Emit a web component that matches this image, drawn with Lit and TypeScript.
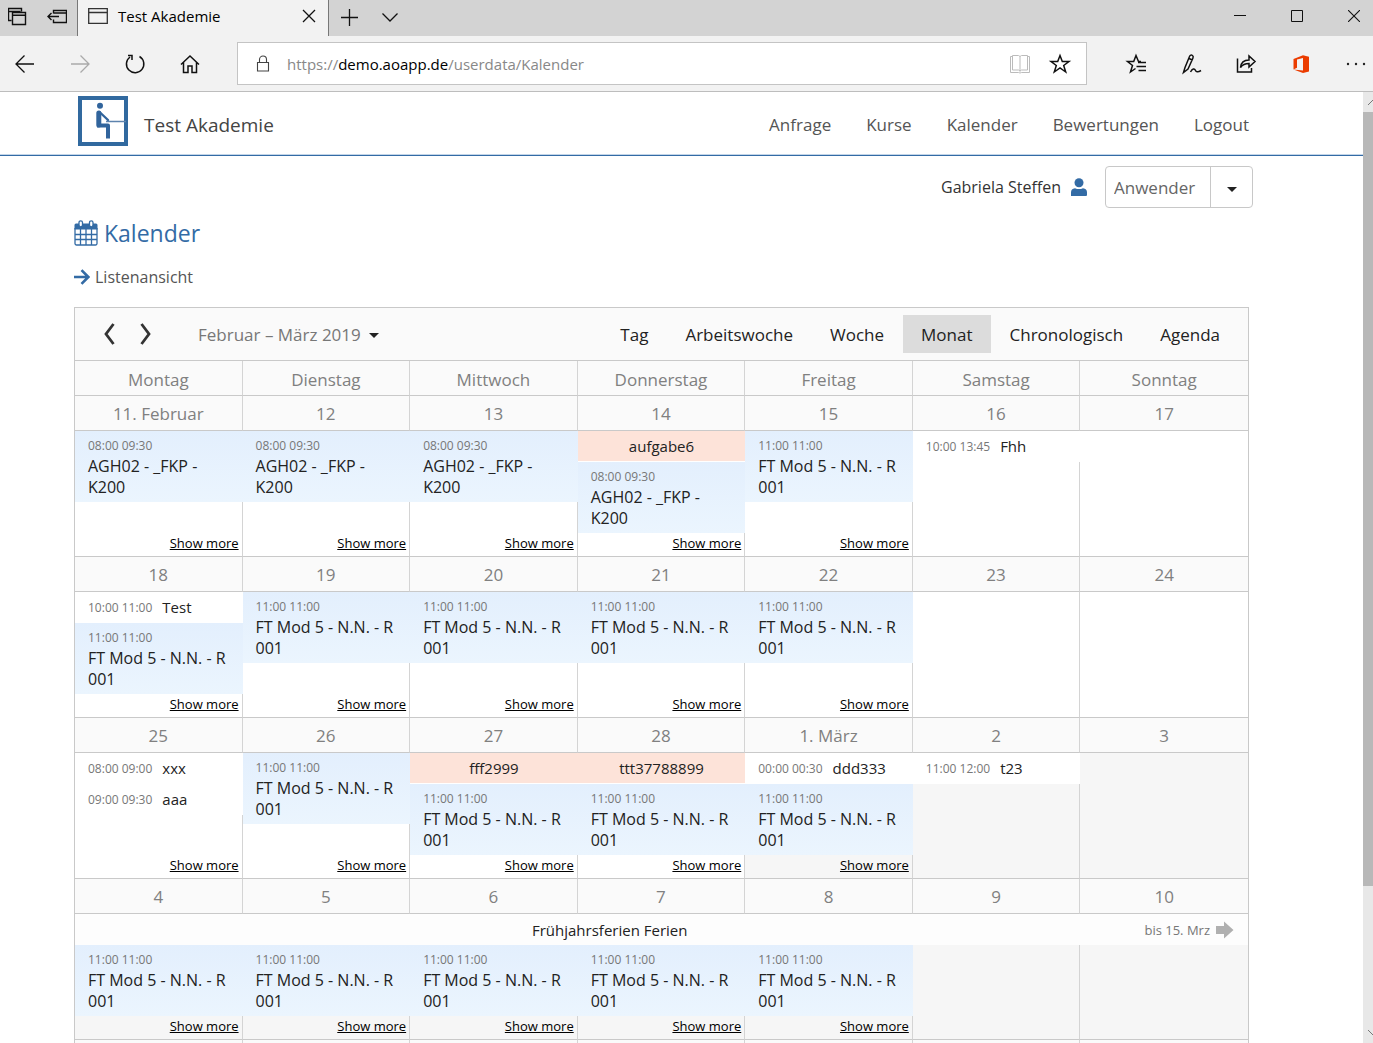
import { LitElement, html, css, svg, nothing } from "lit";
import { customElement, state } from "lit/decorators.js";
import { classMap } from "lit/directives/class-map.js";

type Kind = "course" | "plain" | "task";
interface Entry { kind: Kind; time?: string; title: string; }
interface Day { label: string; entries: Entry[]; more?: boolean; outside?: boolean; }
interface Week { days: Day[]; banner?: { title: string; until: string }; }

const course = (time: string, title: string): Entry => ({ kind: "course", time, title });
const plain = (time: string, title: string): Entry => ({ kind: "plain", time, title });
const task = (title: string): Entry => ({ kind: "task", title });
const agh = () => course("08:00 09:30", "AGH02 - _FKP - K200");
const mod = () => course("11:00 11:00", "FT Mod 5 - N.N. - R 001");

const WEEKDAYS = ["Montag", "Dienstag", "Mittwoch", "Donnerstag", "Freitag", "Samstag", "Sonntag"];
const VIEWS = ["Tag", "Arbeitswoche", "Woche", "Monat", "Chronologisch", "Agenda"];
const LINKS = ["Anfrage", "Kurse", "Kalender", "Bewertungen", "Logout"];

const WEEKS: Week[] = [
  {
    days: [
      { label: "11. Februar", entries: [agh()], more: true },
      { label: "12", entries: [agh()], more: true },
      { label: "13", entries: [agh()], more: true },
      { label: "14", entries: [task("aufgabe6"), agh()], more: true },
      { label: "15", entries: [mod()], more: true },
      { label: "16", entries: [plain("10:00 13:45", "Fhh")] },
      { label: "17", entries: [] },
    ],
  },
  {
    days: [
      { label: "18", entries: [plain("10:00 11:00", "Test"), mod()], more: true },
      { label: "19", entries: [mod()], more: true },
      { label: "20", entries: [mod()], more: true },
      { label: "21", entries: [mod()], more: true },
      { label: "22", entries: [mod()], more: true },
      { label: "23", entries: [] },
      { label: "24", entries: [] },
    ],
  },
  {
    days: [
      { label: "25", entries: [plain("08:00 09:00", "xxx"), plain("09:00 09:30", "aaa")], more: true },
      { label: "26", entries: [mod()], more: true },
      { label: "27", entries: [task("fff2999"), mod()], more: true },
      { label: "28", entries: [task("ttt37788899"), mod()], more: true },
      { label: "1. März", entries: [plain("00:00 00:30", "ddd333"), mod()], more: true, outside: true },
      { label: "2", entries: [plain("11:00 12:00", "t23")], outside: true },
      { label: "3", entries: [], outside: true },
    ],
  },
  {
    banner: { title: "Frühjahrsferien Ferien", until: "bis 15. Mrz" },
    days: [
      { label: "4", entries: [mod()], more: true, outside: true },
      { label: "5", entries: [mod()], more: true, outside: true },
      { label: "6", entries: [mod()], more: true, outside: true },
      { label: "7", entries: [mod()], more: true, outside: true },
      { label: "8", entries: [mod()], more: true, outside: true },
      { label: "9", entries: [], outside: true },
      { label: "10", entries: [], outside: true },
    ],
  },
  {
    days: WEEKDAYS.map(() => ({ label: "", entries: [], outside: true })),
  },
];

const caret = html`<svg class="caret" width="10" height="5" viewBox="0 0 10 5" aria-hidden="true"><path d="M0 0h10L5 5z" fill="#222" /></svg>`;

const line = (body: unknown, size = 24, color = "#111", width = 1.3) => html`
  <svg width=${size} height=${size} viewBox="0 0 ${size} ${size}" fill="none" stroke=${color}
    stroke-width=${width} aria-hidden="true">${body}</svg>`;

const icons = {
  tabs: line(svg`<path d="M3.500 14.500h-3v-12h13v3M.5 5.500h12M4.500 6.500h13v12h-13zM4.500 9.200h13" transform="translate(0 -1)" stroke-width="1.400"/>`, 20),
  aside: line(svg`<path d="M6.500 6.500v-3h13v12h-13v-3M6.500 6h13M1 9.500h11M4.500 6l-3.500 3.500 3.500 3.500" stroke-width="1.400"/>`, 20),
  page: line(svg`<path d="M.7.700h18.600v14.600H.7zM.7 4.500h18.600"/>`, 20, "#333"),
  close: line(svg`<path d="M1 1l12 12M13 1L1 13"/>`, 14),
  plus: line(svg`<path d="M8.500 0v17M0 8.500h17"/>`, 17),
  down: line(svg`<path d="M.5 4.500l7.500 7.500 7.500-7.500"/>`, 16),
  min: line(svg`<path d="M0 5.500h12" stroke-width="1"/>`, 12),
  max: line(svg`<path d="M.5.500h11v11H.5z" stroke-width="1"/>`, 12),
  shut: line(svg`<path d="M0 0l12 12M12 0L0 12" stroke-width="1.100"/>`, 12),
  back: line(svg`<path d="M21 12H3.500M11.500 3.500L3 12l8.500 8.500"/>`),
  forward: line(svg`<path d="M3 12h17.500M12.500 3.500L21 12l-8.500 8.500"/>`, 24, "#aaa"),
  reload: line(svg`<path d="M16.500 4.500A8.700 8.700 0 1 1 7 5M5 3.500h4v4.500" stroke-width="1.500"/>`),
  home: line(svg`<path d="M3 12.500L12 4l9 8.500M5.500 10.500v10h4.500v-6.500h4v6.500h4.500v-10" stroke-width="1.500"/>`),
  lock: line(svg`<path d="M4.500 8.500h11v8.500h-11zM6.500 8.500V5.500a3.500 3.500 0 0 1 7 0v3"/>`, 20, "#444", 1.1),
  book: line(svg`<path d="M4.500 3.500h6l1.500 1 1.500-1h6v14.500h-6l-1.500 1-1.500-1h-6zM12 4.500v15M4.500 4.500h-2v16h8l1.500.5 1.500-.5h8v-16h-2" />`, 24, "#bbb", 1),
  star: line(svg`<path d="M12 3.500l2.300 6H21l-5.300 4 2 6.500L12 16l-5.700 4 2-6.500-5.300-4h6.700z" stroke-width="1.500"/>`),
  favs: line(svg`<path d="M16 9.500h-2.500L11 3.500 8.700 9.500H2.500l5 4-2 6.500 5-3.500M13 10.500h8M11.500 14.500h9.500M13.500 18.500h7.500" stroke-width="1.500"/>`),
  pen: line(svg`<path d="M3.500 20.500l1.500-5L9.500 4.500q1.200-2.200 3-1 1.200 1 .4 2.700L8 17zM9 6.500l3.300 1.500M10.500 20c2-3.500 4-3.800 4.700-2s2.300 2.800 5.800.5" stroke-width="1.500"/>`),
  share: line(svg`<path d="M2.500 6.500v13.500h14v-4M5.500 15.500c.5-5 3.500-7.500 8.500-7.500V4l6 5.500-6 5.500v-3.500c-4 0-6.500 1-8.500 4z" stroke-width="1.500"/>`),
  office: html`<svg width="24" height="24" viewBox="0 0 24 24" aria-hidden="true"><path d="M3.500 7l9.500-3.800 6 1.500v14.800L13 21l-9.500-3.500 9.500 1V6L7 7.500v8.300L3.500 17.500z" fill="#eb3c00" /></svg>`,
  dots: html`<svg width="24" height="24" viewBox="0 0 24 24" aria-hidden="true"><g fill="#222"><circle cx="3" cy="12" r="1.200"/><circle cx="11" cy="12" r="1.200"/><circle cx="19" cy="12" r="1.200"/></g></svg>`,
  logo: html`<svg width="50" height="50" viewBox="0 0 50 50" role="img" aria-label="Test Akademie">
    <rect x="2" y="2" width="46" height="46" fill="#fff" stroke="#31699f" stroke-width="4" />
    <path d="M28 25.500h20" stroke="#5d83ad" stroke-width="1.500" />
    <g fill="none" stroke="#31649c" stroke-linejoin="round">
      <path d="M20.800 17v12" stroke-width="5" stroke-linecap="round" />
      <path d="M21.500 16l8.500 8" stroke-width="2.400" stroke-linecap="round" />
      <path d="M19 29.500h11v13" stroke-width="4" />
    </g>
    <circle cx="22" cy="9.700" r="3" fill="#31649c" /></svg>`,
  user: html`<svg width="16" height="18" viewBox="0 0 16 18" fill="#336ba5" aria-hidden="true"><circle cx="8" cy="4.700" r="4.500"/><path d="M0 18v-3.500Q0 10.500 4 10.200q4 1.800 8 0 4 .3 4 4.300V17q0 1-1 1z"/></svg>`,
  calendar: html`<svg width="24" height="26" viewBox="0 0 24 26" aria-hidden="true">
    <path d="M2 3.500h20a1.500 1.500 0 0 1 1.500 1.500v4.500H.5V5A1.500 1.500 0 0 1 2 3.500z" fill="#336ba5"/>
    <path d="M1 8v15.500a1.500 1.500 0 0 0 1.500 1.500h19a1.500 1.500 0 0 0 1.500-1.500V8M6.500 9v16M12 9v16M17.500 9v16M1 14.500h22M1 19.500h22" fill="none" stroke="#336ba5" stroke-width="1.300"/>
    <g fill="#fff" stroke="#336ba5" stroke-width="1.300"><rect x="5" y=".8" width="3.500" height="6" rx="1.700"/><rect x="15.500" y=".8" width="3.500" height="6" rx="1.700"/></g></svg>`,
  arrow: html`<svg width="16" height="16" viewBox="0 0 16 16" fill="none" stroke="#336ba5" stroke-width="2.600" aria-hidden="true"><path d="M0 8h14M7.500 1.200L14.300 8l-6.800 6.800"/></svg>`,
  prev: html`<svg width="12" height="22" viewBox="0 0 12 22" aria-hidden="true"><path d="M10.500 1L3 11l7.500 10" fill="none" stroke="#333" stroke-width="2.800"/></svg>`,
  next: html`<svg width="12" height="22" viewBox="0 0 12 22" aria-hidden="true"><path d="M1.500 1L9 11l-7.500 10" fill="none" stroke="#333" stroke-width="2.800"/></svg>`,
  onward: html`<svg width="18" height="18" viewBox="0 0 18 18" aria-hidden="true"><path d="M0 5h8V.5L17.500 9 8 17.500V13H0z" fill="#b0b0b0"/></svg>`,
};

const reset = css`
  * { box-sizing: border-box; }
  svg { display: block; flex: none; }
  button { border: 0; padding: 0; background: none; color: inherit; font: inherit; display: grid; place-items: center; cursor: pointer; }
  a { color: inherit; text-decoration: none; }
`;

@customElement("browser-chrome")
class BrowserChrome extends LitElement {
  static styles = [reset, css`
    :host { display: block; flex: none; font-size: 15px; color: #000; }
    .tabs { display: flex; align-items: center; height: 36px; background: #d3d3d3; }
    .lead { display: flex; gap: 19px; padding: 0 10px 2px 8px; }
    .tab { display: flex; align-items: center; align-self: stretch; width: 252px; padding: 0 12px 4px 10px; gap: 10px; background: #f2f2f2; border: 1px solid #777; border-width: 0 1px; }
    .tab span { flex: 1; }
    .tab svg { overflow: visible; }
    .page { display: grid; height: 16px; }
    .page svg { height: 16px; }
    .extra { display: flex; flex: 1; gap: 24px; padding: 0 12px 2px; }
    .window { display: flex; gap: 45px; padding: 0 13px 4px 0; }
    .bar { display: flex; align-items: center; height: 56px; padding: 0 4px 0 13px; background: #f2f2f2; border-bottom: 1px solid #bdbdbd; }
    .group { display: flex; gap: 31px; }
    .address { display: flex; align-items: center; flex: 1; height: 43px; margin: 0 38px 0 35px; padding: 0 14px 0 15px; background: #fff; border: 1px solid #c4c4c4; }
    .url { flex: 1; margin-left: 14px; display: grid; align-items: center; }
    .url input, .url .shown { grid-area: 1 / 1; font: inherit; line-height: 24px; }
    .url input { width: 100%; border: 0; padding: 0; outline: 0; background: none; color: transparent; }
    .shown { color: #888; pointer-events: none; }
    .shown b { font-weight: 400; color: #000; }
    .marks { display: flex; gap: 16px; }
  `];

  render() {
    return html`
      <div class="tabs">
        <div class="lead">
          <button aria-label="Registerkarten">${icons.tabs}</button>
          <button aria-label="Registerkarten ablegen">${icons.aside}</button>
        </div>
        <div class="tab"><div class="page"><svg width="20" height="16" viewBox="0 0 20 16" fill="none" stroke="#333" stroke-width="1.300" aria-hidden="true"><path d="M.7.700h18.600v14.600H.7zM.7 4.500h18.600" /></svg></div><span>Test Akademie</span><button aria-label="Tab schließen">${icons.close}</button></div>
        <div class="extra"><button aria-label="Neuer Tab">${icons.plus}</button><button aria-label="Vorschau">${icons.down}</button></div>
        <div class="window">
          <button aria-label="Minimieren">${icons.min}</button>
          <button aria-label="Maximieren">${icons.max}</button>
          <button aria-label="Schließen">${icons.shut}</button>
        </div>
      </div>
      <div class="bar">
        <div class="group">
          <button aria-label="Zurück">${icons.back}</button>
          <button aria-label="Vor">${icons.forward}</button>
          <button aria-label="Aktualisieren">${icons.reload}</button>
          <button aria-label="Startseite">${icons.home}</button>
        </div>
        <div class="address">
          ${icons.lock}
          <div class="url">
            <input type="text" aria-label="Adresse" />
            <div class="shown">https://<b>demo.aoapp.de</b>/userdata/Kalender</div>
          </div>
          <div class="marks">
            <button aria-label="Leseansicht">${icons.book}</button>
            <button aria-label="Favorit">${icons.star}</button>
          </div>
        </div>
        <div class="group">
          <button aria-label="Favoriten">${icons.favs}</button>
          <button aria-label="Notizen">${icons.pen}</button>
          <button aria-label="Teilen">${icons.share}</button>
          <button aria-label="Office">${icons.office}</button>
          <button aria-label="Mehr">${icons.dots}</button>
        </div>
      </div>`;
  }
}

@customElement("month-calendar")
class MonthCalendar extends LitElement {
  @state() view = "Monat";

  static styles = [reset, css`
    :host { display: block; border: 1px solid #c9c9c9; }
    .bar { display: flex; align-items: center; height: 52px; padding: 0 10px 0 28px; background: #fafafa; font-size: 17px; }
    .nav { display: flex; gap: 25px; }
    .range { display: flex; align-items: center; gap: 8px; margin-left: 46px; color: #777; }
    .range svg { margin-top: 3px; }
    .views { display: flex; gap: 1px; margin-left: auto; color: #222; }
    .views button { height: 38px; padding: 0 18px; }
    .views .active { background: #dcdcdc; }
    table { width: 100%; table-layout: fixed; border-spacing: 0; border-top: 1px solid #c9c9c9; }
    th, td { padding: 0; border-right: 1px solid #d4d4d4; border-bottom: 1px solid #c9c9c9; }
    th:last-child, td:last-child { border-right: 0; }
    th { height: 35px; padding-top: 1px; background: #fafafa; color: #808080; font-size: 17px; font-weight: 400; line-height: 24px; }
    thead th { padding-top: 3px; }
    td { vertical-align: top; }
    .outside { background: #f6f6f6; }
    .cell { display: flex; flex-direction: column; height: 125px; font-size: 15px; line-height: 21px; color: #222; }
    .short .cell { height: 94px; }
    .entry { padding: 5px 8px 4px 13px; margin-right: -1px; }
    .time { display: block; font-size: 12px; line-height: 20px; color: #777; }
    .course { background: linear-gradient(#e3effd, #ebf5fe); }
    .course .title { font-size: 16px; }
    .plain { display: flex; gap: 10px; padding: 5px 13px; background: #fff; }
    .plain .time { line-height: 21px; }
    .task { padding: 5px 12px 4px; background: #fde3d9; border-bottom: 1px solid #fff; text-align: center; }
    .more { margin: auto 3px 3px auto; font-size: 13px; line-height: 20px; color: #000; text-decoration: underline; }
    .banner { border-bottom: 0; background: #fdfdfd; }
    .span { display: flex; align-items: center; height: 31px; padding-right: 14px; font-size: 15px; color: #222; }
    .name { flex: 1; text-align: center; }
    .until { margin-right: 6px; font-size: 13px; color: #777; }
  `];

  private entry(e: Entry) {
    return html`<div class="entry ${e.kind}">
      ${e.time ? html`<span class="time">${e.time}</span>` : nothing}<span class="title">${e.title}</span>
    </div>`;
  }

  private week(w: Week) {
    return html`
      <tr>${w.days.map((d) => html`<th scope="col">${d.label}</th>`)}</tr>
      ${w.banner ? html`<tr><td class="banner" colspan="7"><div class="span">
        <span class="name">${w.banner.title}</span><span class="until">${w.banner.until}</span>${icons.onward}
      </div></td></tr>` : nothing}
      <tr class=${classMap({ short: !!w.banner })}>
        ${w.days.map((d) => html`<td class=${classMap({ outside: !!d.outside })}><div class="cell">
          ${d.entries.map((e) => this.entry(e))}
          ${d.more ? html`<a class="more" href="#">Show more</a>` : nothing}
        </div></td>`)}
      </tr>`;
  }

  render() {
    return html`
      <div class="bar">
        <div class="nav">
          <button aria-label="Vorheriger Monat">${icons.prev}</button>
          <button aria-label="Nächster Monat">${icons.next}</button>
        </div>
        <button class="range"><span>Februar – März 2019</span>${caret}</button>
        <div class="views">
          ${VIEWS.map((v) => html`<button class=${classMap({ active: v === this.view })} @click=${() => (this.view = v)}>${v}</button>`)}
        </div>
      </div>
      <table>
        <thead><tr>${WEEKDAYS.map((d) => html`<th scope="col">${d}</th>`)}</tr></thead>
        <tbody>${WEEKS.map((w) => this.week(w))}</tbody>
      </table>`;
  }
}

@customElement("app-root")
class AppRoot extends LitElement {
  static styles = [reset, css`
    :host { display: flex; flex-direction: column; height: 100vh; overflow: hidden; background: #fff; font-family: "Open Sans", "Noto Sans", sans-serif; color: #333; }
    .view { display: flex; flex: 1; min-height: 0; }
    .page { flex: 1; min-width: 0; overflow: hidden; font-size: 17px; }
    header { display: flex; align-items: center; height: 64px; padding: 0 114px 6px 78px; border-bottom: 1px solid #336ba5; box-shadow: inset 0 -1px #c3d5e8; }
    .brand { margin: 8px 0 0 16px; font-size: 19px; color: #444; }
    nav { display: flex; gap: 35px; margin: 8px 0 0 auto; color: #555; }
    main { padding: 10px 114px 0 74px; }
    .user { display: flex; align-items: center; justify-content: flex-end; margin-right: -4px; }
    .user .person { font-size: 16px; }
    .user svg { margin: 0 18px 0 10px; }
    .role { display: grid; width: 148px; height: 42px; border: 1px solid #c8c8c8; border-radius: 4px; }
    .role select { grid-area: 1 / 1; appearance: none; width: 100%; padding: 0 42px 0 8px; border: 0; background: none; color: #666; font: inherit; outline: 0; }
    .role .drop { grid-area: 1 / 1; justify-self: end; display: grid; place-items: center; width: 42px; border-left: 1px solid #c8c8c8; pointer-events: none; }
    .role .drop svg { margin: 4px 0 0; }
    h1 { display: flex; align-items: center; gap: 6px; margin: 8px 0 15px; font-size: 23px; line-height: 34px; font-weight: 400; color: #336ba5; }
    .list { display: flex; align-items: center; gap: 5px; height: 24px; margin-bottom: 18px; font-size: 16px; color: #555; }
    .scroll { display: flex; flex-direction: column; width: 10px; overflow: hidden; background: #e8e8e8; }
    .end { height: 20px; padding: 6px 0 0 4px; }
    .thumb { flex: 774; background: #b8b8b8; }
    .rest { flex: 137; }
  `];

  render() {
    return html`
      <browser-chrome></browser-chrome>
      <div class="view">
        <div class="page">
          <header>
            ${icons.logo}<span class="brand">Test Akademie</span>
            <nav>${LINKS.map((l) => html`<a href="#">${l}</a>`)}</nav>
          </header>
          <main>
            <div class="user">
              <span class="person">Gabriela Steffen</span>${icons.user}
              <div class="role">
                <select aria-label="Rolle"><option>Anwender</option></select>
                <span class="drop">${caret}</span>
              </div>
            </div>
            <h1>${icons.calendar}Kalender</h1>
            <a class="list" href="#">${icons.arrow}Listenansicht</a>
            <month-calendar></month-calendar>
          </main>
        </div>
        <div class="scroll" aria-hidden="true">
          <div class="end"><svg width="12" height="8" viewBox="0 0 12 8"><path d="M1 7l5-5 5 5" fill="none" stroke="#777"/></svg></div>
          <div class="thumb"></div><div class="rest"></div>
          <div class="end"><svg width="12" height="8" viewBox="0 0 12 8"><path d="M1 1l5 5 5-5" fill="none" stroke="#777"/></svg></div>
        </div>
      </div>`;
  }
}
